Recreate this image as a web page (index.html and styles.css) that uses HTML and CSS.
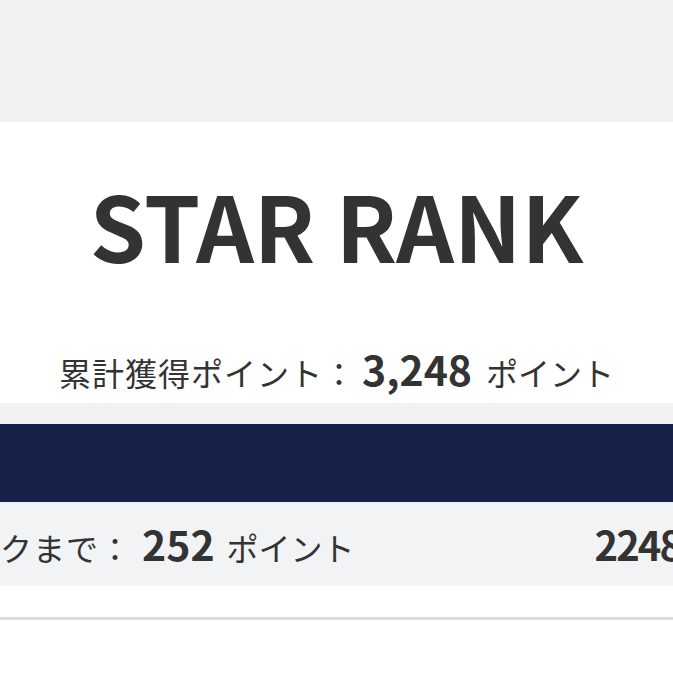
FILE: index.html
```html
<!DOCTYPE html>
<html lang="ja">
<head>
<meta charset="utf-8">
<title>STAR RANK</title>
<link rel="stylesheet" href="styles.css">
</head>
<body>
<div class="page">
  <div class="topbar"></div>
  <section class="rank-card">
    <h1 class="rank-title">STAR RANK</h1>
    <p class="total">
      <span class="label">累計獲得ポイント：</span>
      <span class="num total-num">3,248</span>
      <span class="unit">ポイント</span>
    </p>
  </section>
  <div class="strip"></div>
  <div class="navbar"></div>
  <div class="next-row">
    <p class="next">
      <span class="label">クまで：</span>
      <span class="num">252</span>
      <span class="unit">ポイント</span>
    </p>
    <span class="goal">2248</span>
  </div>
  <div class="spacer"></div>
  <div class="divider"></div>
</div>
</body>
</html>
```

FILE: styles.css
```css
html, body {
  margin: 0;
  padding: 0;
  background: #ffffff;
}
body {
  font-family: "Noto Sans CJK JP", "Noto Sans", sans-serif;
  color: #333333;
  overflow: hidden;
}
.page {
  width: 673px;
  overflow: hidden;
}
.topbar {
  height: 122px;
  background: #f2f1ef;
}
.rank-card {
  background: #ffffff;
  height: 281px;
  box-sizing: border-box;
  padding-top: 57px;
  display: flex;
  flex-direction: column;
  align-items: center;
}
.rank-title {
  margin: 0;
  font-size: 90px;
  line-height: 1;
  font-weight: 700;
  color: #333333;
  white-space: nowrap;
}
.total {
  margin: 79px 0 0;
  display: flex;
  align-items: baseline;
  line-height: 1;
  white-space: nowrap;
}
.label {
  font-size: 32px;
  font-weight: 400;
  letter-spacing: 1px;
}
.unit {
  font-size: 32px;
  font-weight: 400;
}
.num {
  font-size: 41px;
  font-weight: 700;
  margin: 0 12px 0 10px;
}
.total-num {
  margin: 0 14px 0 6px;
}
.strip {
  height: 21px;
  background: #f1f2f4;
}
.navbar {
  height: 78px;
  background: #16224a;
}
.next-row {
  height: 84px;
  box-sizing: border-box;
  padding-top: 21px;
  background: #f2f3f5;
  display: flex;
  justify-content: space-between;
  align-items: baseline;
  overflow: hidden;
}
.next {
  margin: 0;
  display: flex;
  align-items: baseline;
  line-height: 1;
  white-space: nowrap;
}
.goal {
  font-size: 40px;
  font-weight: 700;
  line-height: 1;
  letter-spacing: -2px;
  margin-right: -8px;
  white-space: nowrap;
}
.spacer {
  height: 31px;
}
.divider {
  height: 3px;
  background: #dcdcdc;
}
```
